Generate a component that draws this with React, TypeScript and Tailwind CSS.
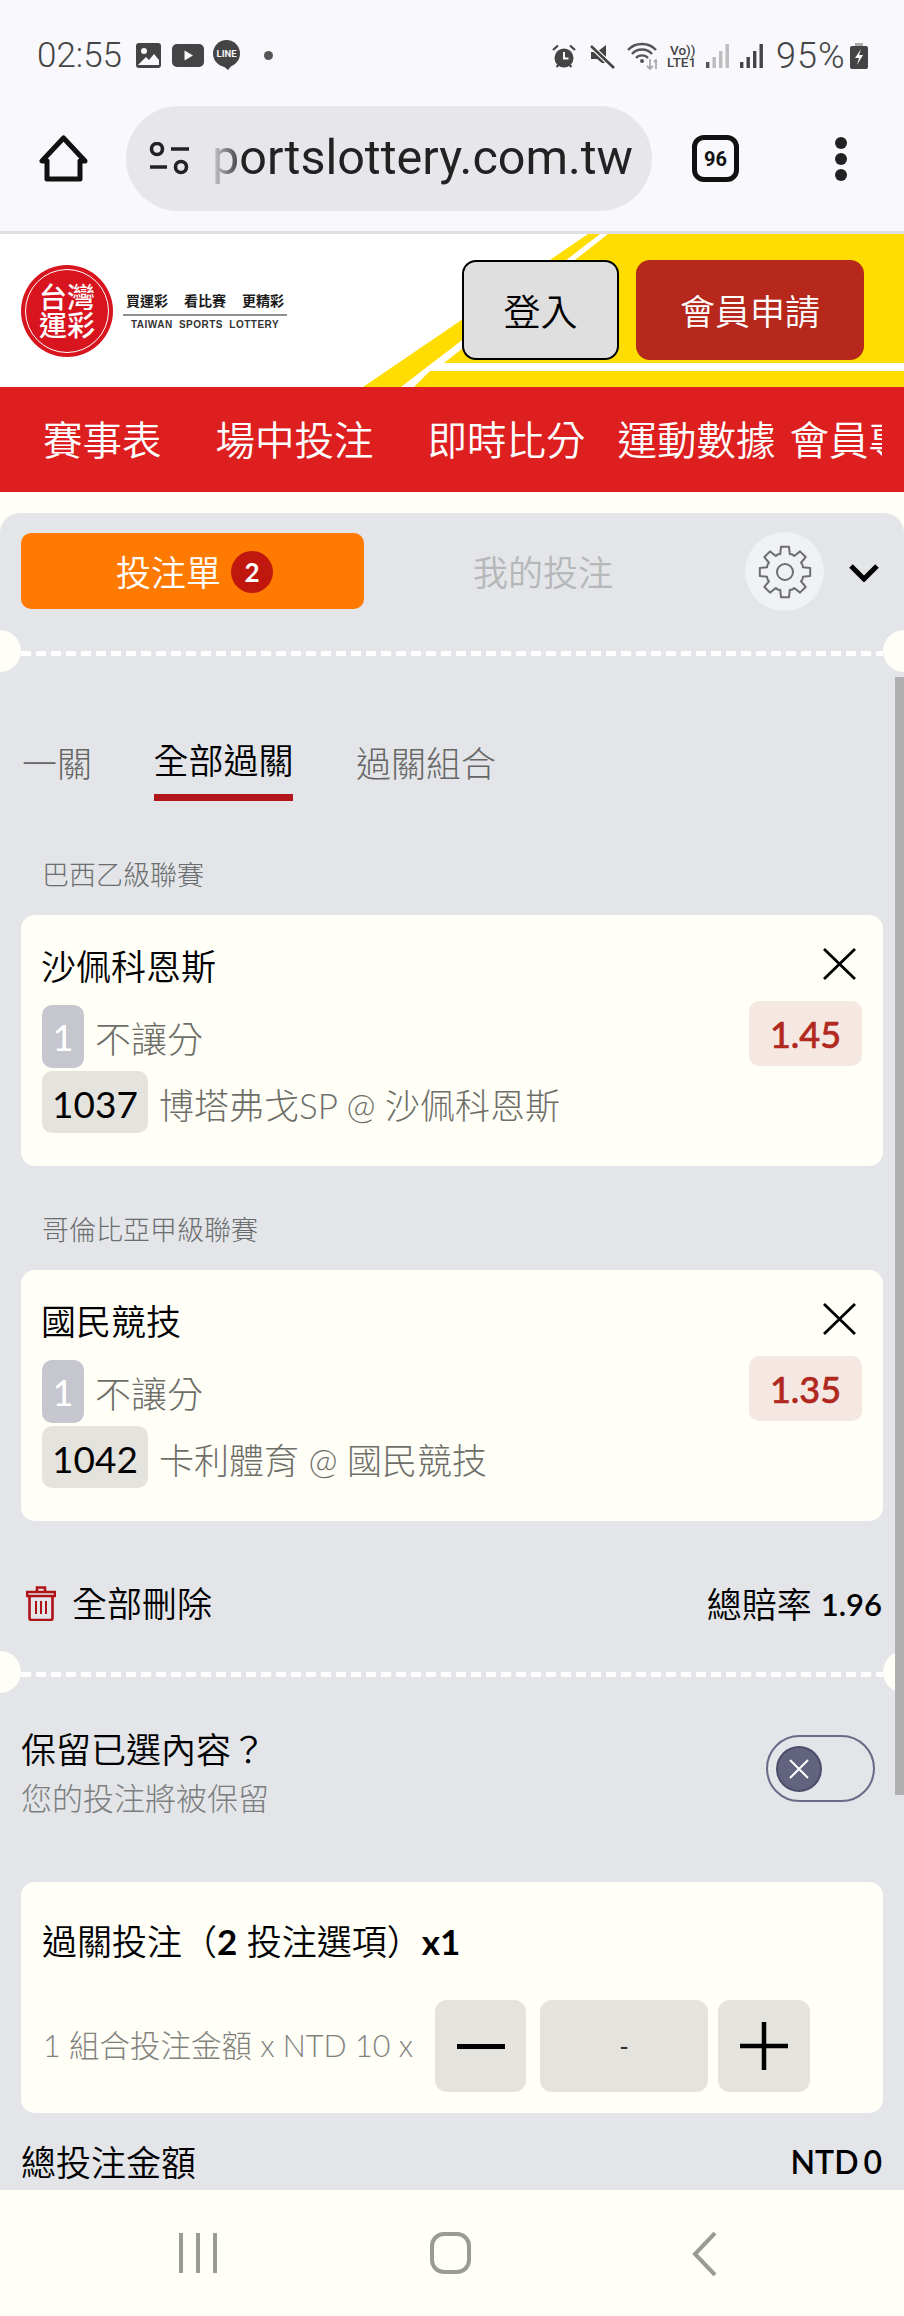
import React from "react";

const gearPath = (() => {
  const pts: string[] = [];
  const cx = 28;
  const cy = 28;
  const pt = (deg: number, r: number) => {
    const a = ((deg - 90) * Math.PI) / 180;
    return `${(cx + r * Math.cos(a)).toFixed(2)} ${(cy + r * Math.sin(a)).toFixed(2)}`;
  };
  for (let i = 0; i < 8; i++) {
    const a = i * 45;
    pts.push(`${i === 0 ? "M" : "Q"}${i === 0 ? "" : pt(a - 22.5, 19.5) + " "}${pt(a - 15, 18.5)}`);
    pts.push(`L${pt(a - 9, 25.5)}`);
    pts.push(`L${pt(a + 9, 25.5)}`);
    pts.push(`L${pt(a + 15, 18.5)}`);
  }
  pts.push(`Q${pt(-22.5, 19.5)} ${pt(-15, 18.5)}Z`);
  return pts.join(" ");
})();

const Gear = () => (
  <svg width="56" height="56" viewBox="0 0 56 56" fill="none" stroke="#6d6e70" strokeWidth="2" strokeLinejoin="round">
    <path d={gearPath} />
    <circle cx="28" cy="28" r="8" />
  </svg>
);

const Divider = () => (
  <div className="relative h-[5px] mx-[21px] bg-[repeating-linear-gradient(90deg,#ffffff_0,#ffffff_10px,transparent_10px,transparent_15px)]">
    <div className="absolute left-[-42px] top-[-21px] w-[42px] h-[42px] rounded-full bg-[#fffef7]" />
    <div className="absolute right-[-42px] top-[-21px] w-[42px] h-[42px] rounded-full bg-[#fffef7]" />
  </div>
);

const CloseIcon = () => (
  <svg width="33" height="32" viewBox="0 0 33 32" fill="none" stroke="#000" strokeWidth="2.8">
    <path d="M1 1 L32 31 M32 1 L1 31" />
  </svg>
);

const BetCard = ({ title, odds, code, match }: { title: string; odds: string; code: string; match: string }) => (
  <div className="mx-[21px] h-[251px] rounded-[14px] bg-[#fffef7] pt-[26px] px-[21px]">
    <div className="flex h-[50px] items-center justify-between">
      <div className="ml-[-1px] text-[35px] font-[350] leading-[50px] text-black">{title}</div>
      <div className="mr-[6px] mt-[-4px]"><CloseIcon /></div>
    </div>
    <div className="mt-[10px] flex h-[67px] items-start justify-between">
      <div className="flex items-start">
        <div className="mt-[4px] flex h-[63px] w-[42px] items-center justify-center rounded-[10px] bg-[#c5c6ce] text-[36px] text-white">1</div>
        <div className="ml-[11px] mt-[13px] text-[36px] leading-[50px] text-[#6e6e68] font-light">不讓分</div>
      </div>
      <div className="flex h-[65px] w-[113px] items-center justify-center rounded-[10px] bg-[#f5e8e3] text-[36px] font-medium text-[#b0281e] [-webkit-text-stroke:0.6px_#b0281e]">{odds}</div>
    </div>
    <div className="mt-[3px] flex h-[62px] items-center">
      <div className="flex h-[62px] w-[106px] items-center justify-center rounded-[10px] bg-[#e4e3de] pt-[3px] text-[37px] text-black">{code}</div>
      <div className="ml-[11px] mt-[5px] whitespace-nowrap text-[35px] leading-[50px] text-[#6e6e68] font-light">{match}</div>
    </div>
  </div>
);

const StatusIcons = () => (
  <div className="flex items-center">
    {/* alarm */}
    <svg width="24" height="25" viewBox="0 0 24 25">
      <circle cx="12" cy="14" r="9.5" fill="#444" />
      <path d="M12 8 V14.5 H16.5" stroke="#f8f8fd" strokeWidth="2" fill="none" />
      <path d="M1 6 L6 1.5 M23 6 L18 1.5 M4.5 23 L6.5 21 M19.5 23 L17.5 21" stroke="#444" strokeWidth="2.2" />
    </svg>
    {/* mute */}
    <svg width="25" height="25" viewBox="0 0 25 25" className="ml-[14px]">
      <path d="M1 8 H7 L16 1 V19 L12 19 L7 15 H1 Z" fill="#444" />
      <path d="M2 3 L24 24" stroke="#f8f8fd" strokeWidth="5" />
      <path d="M1 2 L24 24" stroke="#444" strokeWidth="2.6" />
    </svg>
    {/* wifi */}
    <svg width="30" height="28" viewBox="0 0 30 28" className="ml-[12px]" fill="none">
      <path d="M1 8 C8 0 22 0 29 8" stroke="#555" strokeWidth="2.4" />
      <path d="M5 12 C10 6 20 6 25 12" stroke="#555" strokeWidth="2.4" />
      <path d="M9 16 C12 12.5 18 12.5 21 16" stroke="#555" strokeWidth="2.4" />
      <circle cx="15" cy="19" r="2" fill="#555" />
      <path d="M23 17 V27 M20 24 L23 27 L26 24" stroke="#aaa" strokeWidth="1.8" />
      <path d="M29 27 V18 M27 20 L29 18 L31 20" stroke="#aaa" strokeWidth="1.8" />
    </svg>
    <div className="ml-[10px] flex w-[31px] flex-col font-['Roboto',sans-serif] text-[13.5px] font-medium leading-[12.5px] text-[#444]">
      <span className="pl-[3px]">Vo))</span>
      <span>LTE1</span>
    </div>
    {/* sim 1 */}
    <svg width="23" height="24" viewBox="0 0 23 24" className="ml-[8px]" fill="#bdbdbd">
      <rect x="0" y="18" width="3.4" height="6" fill="#555" />
      <rect x="6.5" y="13" width="3.4" height="11" />
      <rect x="13" y="7" width="3.4" height="17" />
      <rect x="19.5" y="0" width="3.4" height="24" />
    </svg>
    {/* sim 2 */}
    <svg width="23" height="24" viewBox="0 0 23 24" className="ml-[11px]" fill="#444">
      <rect x="0" y="18" width="3.4" height="6" />
      <rect x="6.5" y="13" width="3.4" height="11" />
      <rect x="13" y="7" width="3.4" height="17" />
      <rect x="19.5" y="0" width="3.4" height="24" />
    </svg>
    <span className="ml-[13px] w-[67px] whitespace-nowrap font-['Roboto',sans-serif] text-[36px] font-light leading-none tracking-[1px] text-[#444]">95%</span>
    <svg width="18" height="26" viewBox="0 0 18 26" className="ml-[7px]">
      <rect x="5" y="0" width="8" height="3" fill="#aaa" />
      <rect x="0" y="3" width="18" height="23" rx="2" fill="#444" />
      <path d="M11 6 L5 15 H9 L7 22 L13 12 H9 Z" fill="#f8f8fd" />
    </svg>
  </div>
);

const Logo = () => (
  <div className="flex items-center">
    <div className="flex h-[92px] w-[92px] items-center justify-center rounded-full bg-[#d8141f]">
      <div className="flex h-[84px] w-[84px] items-center justify-center rounded-full border border-white">
        <div className="w-[56px] text-center text-[28px] font-medium leading-[28px] text-white">台灣運彩</div>
      </div>
    </div>
    <div className="ml-[10px] flex w-[164px] flex-col items-center">
      <div className="flex w-[158px] justify-between whitespace-nowrap text-[14px] font-bold leading-[22px] text-[#1a1a1a]">
        <span>買運彩</span>
        <span>看比賽</span>
        <span>更精彩</span>
      </div>
      <div className="mt-[2px] h-[2px] w-[164px] bg-[#8f8f8f]" />
      <div className="mt-[2px] whitespace-nowrap font-['Liberation_Sans',sans-serif] text-[10px] font-bold leading-[14px] tracking-[0.5px] text-[#333] [word-spacing:3px]">TAIWAN SPORTS LOTTERY</div>
    </div>
  </div>
);

export default function App() {
  return (
    <div className="relative h-[2316px] w-[904px] overflow-hidden bg-[#fffef7] font-['Lato','Noto_Sans_CJK_TC',sans-serif]">
      {/* system + browser chrome */}
      <div className="h-[231px] bg-[#f8f8fd]">
        <div className="flex h-[106px] items-start justify-between pl-[37px] pr-[36px] pt-[38px]">
          <div className="flex h-[34px] items-center">
            <span className="font-['Roboto',sans-serif] text-[35px] font-light leading-none text-[#444]">02:55</span>
            <svg width="25" height="25" viewBox="0 0 25 25" className="ml-[14px]">
              <rect x="0" y="0" width="25" height="25" rx="3" fill="#444" />
              <circle cx="8" cy="8" r="3" fill="#f8f8fd" />
              <path d="M2 22 L10 14 L13 17 L18 11 L23 17 V22 Z" fill="#f8f8fd" />
            </svg>
            <svg width="32" height="23" viewBox="0 0 32 23" className="ml-[11px]">
              <rect width="32" height="23" rx="5" fill="#444" />
              <path d="M12.5 6.5 L21 11.5 L12.5 16.5 Z" fill="#f8f8fd" />
            </svg>
            <svg width="31" height="30" viewBox="0 0 31 30" className="ml-[7px]">
              <circle cx="15.5" cy="13.5" r="13.5" fill="#444" />
              <path d="M11 25 L17 30 L21 25 Z" fill="#444" />
              <text x="15.5" y="17" textAnchor="middle" fontSize="9.5" fontWeight="700" fontFamily="Roboto" fill="#f8f8fd">LINE</text>
            </svg>
            <div className="ml-[22px] h-[9px] w-[9px] rounded-full bg-[#555]" />
          </div>
          <StatusIcons />
        </div>
        <div className="flex h-[105px] items-center">
          <svg width="49" height="47" viewBox="0 0 49 47" fill="none" stroke="#111" strokeWidth="5" strokeLinejoin="round" className="ml-[39px]">
            <path d="M24.5 3 L3 26 H8 V44 H41 V26 H46 Z" />
          </svg>
          <div className="ml-[38px] flex h-[105px] w-[526px] items-center overflow-hidden rounded-full bg-[#e6e6eb]">
            <svg width="40" height="33" viewBox="0 0 40 33" fill="none" stroke="#222" strokeWidth="3.6" className="ml-[23px]">
              <circle cx="8" cy="7" r="5.5" />
              <path d="M22 7 H40" />
              <path d="M1 25 H18" />
              <circle cx="32" cy="25" r="5.5" />
            </svg>
            <span className="ml-[23px] whitespace-nowrap font-['Roboto',sans-serif] text-[48.5px] leading-none text-[#222]">
              <span className="bg-linear-to-r from-[#d0d0d4] to-[#444] bg-clip-text text-transparent">p</span>ortslottery.com.tw
            </span>
          </div>
          <div className="ml-[40px] flex h-[47px] w-[47px] items-center justify-center rounded-[12px] border-[5px] border-[#111] font-['Roboto',sans-serif] text-[20px] font-bold text-[#111]">96</div>
          <div className="ml-[96px] flex flex-col gap-[4px]">
            <div className="h-[12px] w-[12px] rounded-full bg-[#222]" />
            <div className="h-[12px] w-[12px] rounded-full bg-[#222]" />
            <div className="h-[12px] w-[12px] rounded-full bg-[#222]" />
          </div>
        </div>
      </div>
      <div className="h-[3px] bg-[#e0e0e4]" />

      {/* site header */}
      <div className="relative flex h-[153px] items-center justify-between bg-white pl-[21px] pr-[40px]">
        <svg width="904" height="153" viewBox="0 0 904 153" className="absolute inset-0" fill="#ffdd00">
          <path d="M588 0 H600 L401 153 H363 Z" />
          <path d="M608 0 H904 V129 H444 Z" />
          <path d="M430 137 H904 V153 H414 Z" />
        </svg>
        <div className="relative"><Logo /></div>
        <div className="relative mt-[-2px] flex gap-[17px]">
          <div className="flex h-[100px] w-[157px] items-center justify-center rounded-[14px] border-[2px] border-black bg-[#dfdfdf] pt-[4px] text-[37px] font-[350] text-black">登入</div>
          <div className="flex h-[100px] w-[228px] items-center justify-center rounded-[14px] bg-[#b5281b] pt-[4px] text-[35px] font-[350] text-white">會員申請</div>
        </div>
      </div>

      {/* nav */}
      <div className="h-[105px] bg-[#de1f20] pl-[43px] pr-[22px]">
        <div className="flex h-[105px] items-center overflow-hidden whitespace-nowrap text-[39.5px] font-[350] text-white">
          <span className="shrink-0">賽事表</span>
          <span className="ml-[54px] shrink-0">場中投注</span>
          <span className="ml-[54px] shrink-0">即時比分</span>
          <span className="ml-[32px] shrink-0">運動數據</span>
          <span className="ml-[14px] shrink-0">會員專區</span>
        </div>
      </div>
      <div className="h-[21px]" />

      {/* bet slip panel */}
      <div className="relative h-[1677px] overflow-hidden rounded-t-[20px] bg-[#e3e5e8]">
        <div className="absolute right-0 top-[164px] z-10 h-[1118px] w-[9px] bg-[#b0b0b0]" />
        <div className="flex h-[96px] items-end pl-[21px]">
          <div className="flex h-[76px] w-[343px] items-center justify-center rounded-[10px] bg-[#ff7a00] pl-[4px] pt-[2px]">
            <span className="text-[35px] font-[350] text-white">投注單</span>
            <span className="ml-[10px] flex h-[42px] w-[42px] items-center justify-center rounded-full bg-[#c0170f] text-[26px] font-bold text-white">2</span>
          </div>
          <div className="ml-[109px] flex h-[76px] items-center pt-[3px] text-[35px] font-[350] text-[#b5b7b9]">我的投注</div>
          <div className="ml-[132px] mb-[-2px] flex h-[79px] w-[79px] items-center justify-center rounded-full bg-[#f0f1f4]">
            <Gear />
          </div>
          <svg width="30" height="18" viewBox="0 0 30 18" fill="none" stroke="#000" strokeWidth="5" className="ml-[25px] mb-[27px]">
            <path d="M2 2 L15 15 L28 2" />
          </svg>
        </div>

        <div className="mt-[42px]"><Divider /></div>

        {/* tabs */}
        <div className="mt-[70px] flex pl-[22px]">
          <div className="w-[70px] pt-[3px] text-[35px] leading-[68px] text-[#666] font-light">一關</div>
          <div className="ml-[62px] flex w-[139px] flex-col items-center whitespace-nowrap border-b-[7px] border-[#b3161a] text-[35px] font-[350] leading-[68px] text-black">全部過關</div>
          <div className="ml-[63px] pt-[3px] text-[35px] leading-[68px] text-[#666] font-light">過關組合</div>
        </div>

        <div className="ml-[42px] mt-[54px] mb-[20px] h-[40px] text-[27px] leading-[40px] text-[#6b6e6f] font-light">巴西乙級聯賽</div>
        <BetCard title="沙佩科恩斯" odds="1.45" code="1037" match="博塔弗戈SP @ 沙佩科恩斯" />

        <div className="ml-[42px] mt-[44px] mb-[20px] h-[40px] text-[27px] leading-[40px] text-[#6b6e6f] font-light">哥倫比亞甲級聯賽</div>
        <BetCard title="國民競技" odds="1.35" code="1042" match="卡利體育 @ 國民競技" />

        {/* delete all + total odds */}
        <div className="mt-[57px] flex h-[50px] items-center justify-between pl-[26px] pr-[22px]">
          <div className="flex items-center">
            <svg width="30" height="36" viewBox="0 0 30 36" fill="none" stroke="#b01218" strokeWidth="2.6">
              <path d="M11 6 V2.5 H19 V6" />
              <path d="M1 7 H29 V11 H1 Z" />
              <path d="M3.5 11 V33 Q3.5 35 5.5 35 H24.5 Q26.5 35 26.5 33 V11" />
              <path d="M10 16 V29 M15 16 V29 M20 16 V29" strokeWidth="2" />
            </svg>
            <span className="ml-[16px] text-[35px] font-[350] text-black">全部刪除</span>
          </div>
          <div className="flex items-center pt-[3px] text-black">
            <span className="text-[35px] font-[350]">總賠率</span>
            <span className="ml-[9px] text-[31px] font-semibold">1.96</span>
          </div>
        </div>

        <div className="mt-[44px]"><Divider /></div>

        {/* keep selections */}
        <div className="mt-[47px] flex h-[94px] items-start justify-between pl-[21px] pr-[29px]">
          <div className="flex flex-col">
            <div className="h-[50px] text-[35px] font-[350] leading-[50px] text-black">保留已選內容？</div>
            <div className="mt-[4px] h-[40px] text-[31px] leading-[40px] text-[#7b7d7e] font-light">您的投注將被保留</div>
          </div>
          <div className="mt-[11px] flex h-[67px] w-[109px] items-center rounded-full border-[2px] border-[#6a6b87] pl-[8px]">
            <div className="flex h-[46px] w-[46px] items-center justify-center rounded-full border-[2px] border-[#4c4d6b] bg-[#62637f]">
              <svg width="22" height="22" viewBox="0 0 22 22" stroke="#fff" strokeWidth="2">
                <path d="M2 2 L20 20 M20 2 L2 20" />
              </svg>
            </div>
          </div>
        </div>

        {/* stake card */}
        <div className="mx-[21px] mt-[64px] h-[231px] rounded-[14px] bg-[#fffef7] pt-[34px] pl-[22px]">
          <div className="ml-[-1px] flex h-[50px] items-center whitespace-nowrap text-[35px] font-[350] leading-[50px] text-black">
            過關投注（<span className="font-bold">2</span>&nbsp;投注選項）<span className="font-bold">x1</span>
          </div>
          <div className="mt-[34px] flex h-[92px] items-center">
            <div className="w-[392px] whitespace-nowrap text-[30.5px] text-[#82827d] font-light">1 組合投注金額 x NTD 10 x</div>
            <div className="flex h-[92px] w-[91px] items-center justify-center rounded-[12px] bg-[#e4e3de]">
              <div className="h-[5px] w-[48px] bg-black" />
            </div>
            <div className="ml-[14px] flex h-[92px] w-[168px] items-center justify-center rounded-[12px] bg-[#e4e3de] text-[26px] text-[#333]">-</div>
            <div className="ml-[10px] flex h-[92px] w-[92px] items-center justify-center rounded-[12px] bg-[#e4e3de]">
              <svg width="48" height="48" viewBox="0 0 48 48" stroke="#000" strokeWidth="4.5">
                <path d="M0 24 H48 M24 0 V48" />
              </svg>
            </div>
          </div>
        </div>

        {/* total stake */}
        <div className="mt-[24px] flex h-[50px] items-center justify-between pl-[21px] pr-[22px] text-black">
          <span className="text-[35px] font-[350]">總投注金額</span>
          <span className="text-[32px] font-semibold [word-spacing:-3px]">NTD 0</span>
        </div>
      </div>

      {/* android nav */}
      <div className="flex h-[126px] items-start bg-[#fffef7] pt-[42px]">
        <svg width="38" height="42" viewBox="0 0 38 42" stroke="#9a9a96" strokeWidth="4" className="ml-[179px]">
          <path d="M2 1 V41 M19 1 V41 M36 1 V41" />
        </svg>
        <svg width="41" height="42" viewBox="0 0 41 42" fill="none" stroke="#9a9a96" strokeWidth="4" className="ml-[213px]">
          <rect x="2" y="2" width="37" height="38" rx="12" />
        </svg>
        <svg width="25" height="44" viewBox="0 0 25 44" fill="none" stroke="#9a9a96" strokeWidth="4" className="ml-[221px]">
          <path d="M23 1 L3 22 L23 43" />
        </svg>
      </div>
    </div>
  );
}
